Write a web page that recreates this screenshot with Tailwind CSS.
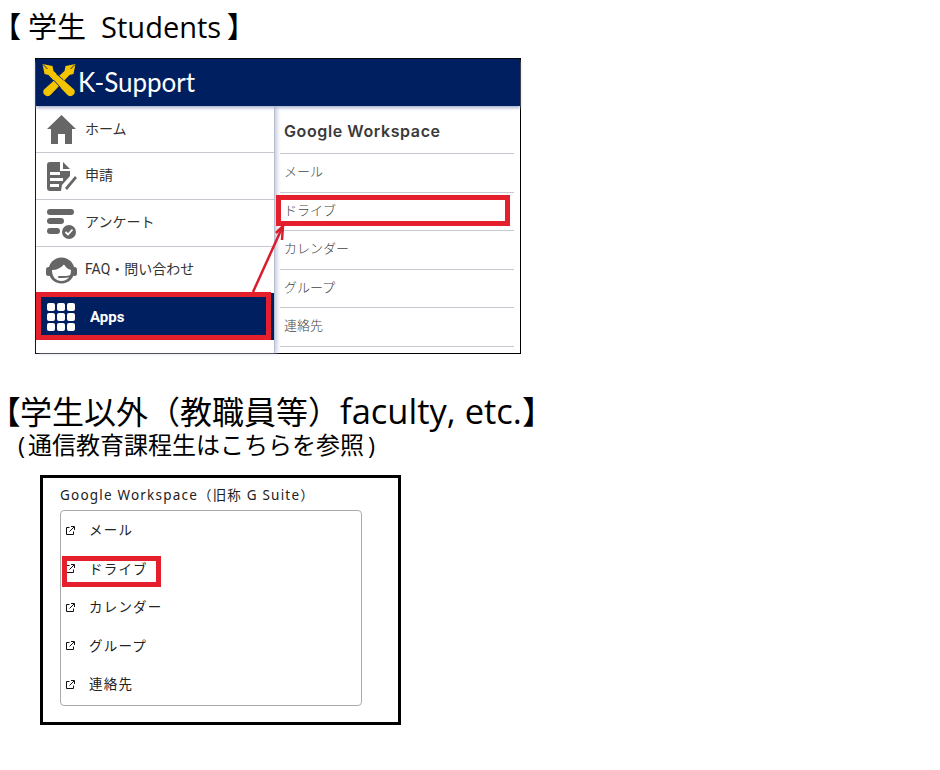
<!DOCTYPE html>
<html lang="ja">
<head>
<meta charset="utf-8">
<script src="https://cdn.jsdelivr.net/npm/@tailwindcss/browser@4"></script>
</head>
<body class="bg-white text-black font-['Open_Sans','Noto_Sans_CJK_JP',sans-serif]">
<div class="relative w-[940px] h-[770px] overflow-hidden">
  <h1 class="h-[58px] pt-[6px] pl-[6px] text-[29px] leading-[42px] font-normal whitespace-pre"><span class="[font-feature-settings:'palt']">【</span> 学生&nbsp; Students<span class="-ml-[2px]"> 】</span></h1>

  <!-- K-Support screenshot -->
  <section class="ml-[35px] w-[486px] h-[296px] border border-black flex flex-col">
    <header class="h-[47px] bg-[#001f60] flex items-center pl-[7px] gap-[3px] shadow-[0_2px_3px_#aab4d0] z-10">
      <svg class="w-[32px] h-[33px] -mt-[2px] overflow-visible" viewBox="3.500 5 32 33">
        <path d="M36 4 L26 6 L25 11 L4 30 Q3 34 6 35.500 Q9 37 11 35 L30 15 L34 14 Z" fill="#f4c400"/>
        <path d="M3 4 L13 6 L14 11 L35 30 Q36 34 33 35.500 Q30 37 28 35 L9 15 L5 14 Z" fill="#f4c400"/>
        <path d="M16.500 13.500 L24 20 M14 20 L21 27.500 M3.500 4.500 L8 9 M35.500 4.500 L31 9" stroke="#001f60" stroke-width="0.900"/>
      </svg>
      <span class="-mt-[2px] text-white text-[26px] leading-none font-['Lato','Open_Sans',sans-serif]">K-Support</span>
    </header>
    <div class="flex-1 flex min-h-0">
      <nav class="w-[239px] h-full text-[14px] text-[#333] border-r border-[#b8bfd0] shadow-[2px_0_4px_#c4cadb] font-['Roboto','Noto_Sans_CJK_JP',sans-serif]">
        <div class="h-[47px] border-b border-[#c8c8d0] flex items-center pl-[10px] gap-[8px]">
          <svg class="w-[31px] h-[31px]" viewBox="0 0 31 31" fill="#666"><path d="M15.500 1 L30 15 L26 15 L26 30 L19 30 L19 20 L12 20 L12 30 L5 30 L5 15 L1 15 Z"/></svg>
          <span>ホーム</span>
        </div>
        <div class="h-[47px] border-b border-[#c8c8d0] flex items-center pl-[10px] gap-[8px]">
          <svg class="w-[31px] h-[31px]" viewBox="0 0 31 31" fill="#666"><path d="M1 4 Q1 1 4 1 L14 1 L14 10 L24 10 L24 15 L16 24 L15 30 L4 30 Q1 30 1 27 Z"/><path d="M17 1 L24 8 L17 8 Z"/><path d="M19 27 L29 15 L31 17 L21 29 Z"/><path d="M4 11 H14 V14 H4 Z M4 17 H17 V20 H4 Z M4 23 H13 V26 H4 Z" fill="#fff"/></svg>
          <span class="-mt-[2px]">申請</span>
        </div>
        <div class="h-[47px] border-b border-[#c8c8d0] flex items-center pl-[10px] gap-[8px]">
          <svg class="w-[31px] h-[31px]" viewBox="0 0 31 31" fill="#666"><rect x="1" y="1" width="27" height="6" rx="3"/><rect x="1" y="10" width="17" height="6" rx="3"/><rect x="1" y="20" width="13" height="6" rx="3"/><circle cx="23" cy="24" r="7"/><path d="M19.500 24 L22 26.500 L26.500 21.500" stroke="#fff" stroke-width="1.800" fill="none"/></svg>
          <span class="-mt-[2px]">アンケート</span>
        </div>
        <div class="h-[46px] flex items-center pl-[10px] gap-[8px]">
          <svg class="w-[31px] h-[31px]" viewBox="0 0 31 31" fill="#666"><circle cx="15.500" cy="15.500" r="13"/><rect x="0" y="12" width="5" height="9" rx="2.500"/><rect x="26" y="12" width="5" height="9" rx="2.500"/><path d="M6 15 C11 15 15 13 18 9.500 C20 12.500 22 14.500 25 15 C25 22 21 26 15.500 26 C10 26 6 22 6 15 Z" fill="#fff"/><path d="M27 19 C25 22 21 22.500 13 22" stroke="#666" stroke-width="2" stroke-linecap="round" fill="none"/></svg>
          <span class="-mt-[2px]">FAQ・問い合わせ</span>
        </div>
        <div class="h-[47px] bg-[#001f60] flex items-center pl-[11px] gap-[15px] text-white font-bold">
          <div class="w-[28px] grid grid-cols-3 gap-[2px]">
            <i class="h-[8px] rounded-[2px] bg-white"></i><i class="h-[8px] rounded-[2px] bg-white"></i><i class="h-[8px] rounded-[2px] bg-white"></i>
            <i class="h-[8px] rounded-[2px] bg-white"></i><i class="h-[8px] rounded-[2px] bg-white"></i><i class="h-[8px] rounded-[2px] bg-white"></i>
            <i class="h-[8px] rounded-[2px] bg-white"></i><i class="h-[8px] rounded-[2px] bg-white"></i><i class="h-[8px] rounded-[2px] bg-white"></i>
          </div>
          <span class="text-[15px] mt-[1px]">Apps</span>
        </div>
      </nav>
      <div class="flex-1 pl-[5px] pr-[6px] text-[13px] text-[#444] font-['Roboto','Noto_Sans_CJK_JP',sans-serif] font-light">
        <div class="h-[48px] border-b border-[#c8c8d0] flex items-center pl-[4px] pt-[2px] text-[16px] font-semibold font-['Inter',sans-serif] text-[#3a3a3a] tracking-[0.6px]">Google Workspace</div>
        <div class="h-[39px] border-b border-[#c8c8d0] flex items-center pl-[4px] pb-[2px]">メール</div>
        <div class="h-[38px] border-b border-[#c8c8d0] flex items-center pl-[4px] pb-[2px]">ドライブ</div>
        <div class="h-[39px] border-b border-[#c8c8d0] flex items-center pl-[4px] pb-[2px]">カレンダー</div>
        <div class="h-[38px] border-b border-[#c8c8d0] flex items-center pl-[4px] pb-[2px]">グループ</div>
        <div class="h-[39px] border-b border-[#c8c8d0] flex items-center pl-[4px] pb-[2px]">連絡先</div>
      </div>
    </div>
  </section>

  <h2 class="mt-[35px] pl-[4px] h-[45px] text-[32px] leading-[44px] font-normal whitespace-nowrap"><span class="[font-feature-settings:'palt']">【</span>学生以外（教職員等）<span class="text-[34.500px]">faculty, etc.</span>】</h2>
  <p class="pl-[18px] h-[21px] text-[24px] leading-[22px] font-normal whitespace-nowrap"><span class="mr-[3px]">(</span>通信教育課程生はこちらを参照<span class="ml-[4px]">)</span></p>

  <!-- Portal screenshot -->
  <section class="mt-[20px] ml-[40px] w-[361px] h-[250px] border-[3px] border-black pt-[7px] pl-[17px] text-[13.500px] tracking-[1.200px] text-[#222] font-['Noto_Sans','Noto_Sans_CJK_JP',sans-serif]">
    <div class="h-[25px] leading-[20px] whitespace-nowrap">Google Workspace（旧称 G Suite）</div>
    <ul class="w-[302px] h-[196px] border border-[#aaa] rounded-[4px]">
      <li class="h-[38.500px] flex items-center pl-[5px] gap-[14px]"><svg class="w-[9px] h-[9px]" viewBox="0 0 9 9" fill="none" stroke="#111" stroke-width="1"><path d="M3.500 1.500 H0.500 V8.500 H7.500 V5.500"/><path d="M3.500 5.500 L8 1 M5 0.500 H8.500 V4"/></svg><span>メール</span></li>
      <li class="h-[38.500px] flex items-center pl-[5px] gap-[14px]"><svg class="w-[9px] h-[9px]" viewBox="0 0 9 9" fill="none" stroke="#111" stroke-width="1"><path d="M3.500 1.500 H0.500 V8.500 H7.500 V5.500"/><path d="M3.500 5.500 L8 1 M5 0.500 H8.500 V4"/></svg><span>ドライブ</span></li>
      <li class="h-[38.500px] flex items-center pl-[5px] gap-[14px]"><svg class="w-[9px] h-[9px]" viewBox="0 0 9 9" fill="none" stroke="#111" stroke-width="1"><path d="M3.500 1.500 H0.500 V8.500 H7.500 V5.500"/><path d="M3.500 5.500 L8 1 M5 0.500 H8.500 V4"/></svg><span>カレンダー</span></li>
      <li class="h-[38.500px] flex items-center pl-[5px] gap-[14px]"><svg class="w-[9px] h-[9px]" viewBox="0 0 9 9" fill="none" stroke="#111" stroke-width="1"><path d="M3.500 1.500 H0.500 V8.500 H7.500 V5.500"/><path d="M3.500 5.500 L8 1 M5 0.500 H8.500 V4"/></svg><span>グループ</span></li>
      <li class="h-[38.500px] flex items-center pl-[5px] gap-[14px]"><svg class="w-[9px] h-[9px]" viewBox="0 0 9 9" fill="none" stroke="#111" stroke-width="1"><path d="M3.500 1.500 H0.500 V8.500 H7.500 V5.500"/><path d="M3.500 5.500 L8 1 M5 0.500 H8.500 V4"/></svg><span>連絡先</span></li>
    </ul>
  </section>

  <!-- Red annotations -->
  <div class="absolute left-[36px] top-[292px] w-[235px] h-[48px] border-[5px] border-[#e61f2d]"></div>
  <div class="absolute left-[276px] top-[195px] w-[234px] h-[31px] border-[5px] border-[#e61f2d]"></div>
  <div class="absolute left-[62px] top-[556px] w-[99px] h-[31px] border-[5px] border-[#e61f2d]"></div>
  <svg class="absolute left-[245px] top-[220px] w-[45px] h-[75px]" viewBox="0 0 45 75" fill="none" stroke="#d81e2c" stroke-width="2.500">
    <path d="M8 72 L37 8"/>
    <path d="M31 13 L38 6 L37 20"/>
  </svg>
</div>
</body>
</html>
